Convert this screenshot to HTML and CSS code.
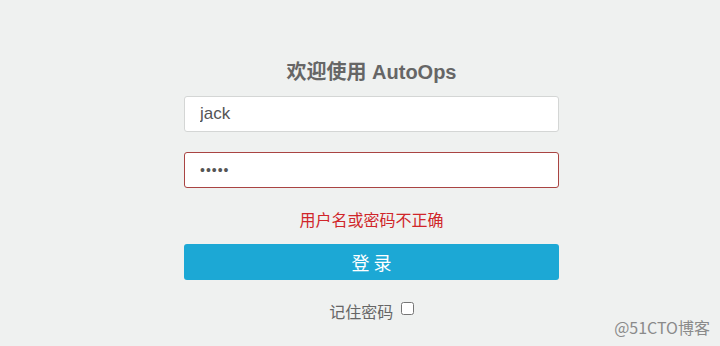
FILE: index.html
```html
<!DOCTYPE html>
<html lang="zh-CN">
<head>
    <meta charset="UTF-8">
    <meta name="viewport" content="width=device-width, initial-scale=1.0">
    <title>AutoOps 登录</title>
    <link rel="stylesheet" href="styles.css">
</head>
<body>
    <form class="login">
        <h1 class="title">欢迎使用 AutoOps</h1>
        <input class="field" type="text" value="jack">
        <input class="field field-error" type="password" value="12345">
        <p class="error">用户名或密码不正确</p>
        <button class="submit" type="button">登 录</button>
        <label class="remember">记住密码 <input type="checkbox" class="check"></label>
    </form>
    <div class="watermark">@51CTO博客</div>
</body>
</html>
```

FILE: styles.css
```css
body {
    margin: 0;
    height: 346px;
    background-color: #eff1f0;
    font-family: "Liberation Sans", "Noto Sans CJK SC", sans-serif;
    position: relative;
    overflow: hidden;
}
.login {
    width: 375px;
    margin-left: 184px;
    padding-top: 58px;
    display: flex;
    flex-direction: column;
}
.title {
    margin: 0 0 10px;
    font-size: 20px;
    line-height: 28px;
    font-weight: bold;
    color: #666;
    text-align: center;
}
.field {
    box-sizing: border-box;
    height: 36px;
    margin: 0 0 20px;
    padding: 0 15px;
    border: 1px solid #d4d6d5;
    border-radius: 3px;
    background-color: #fff;
    font-family: "Liberation Sans", sans-serif;
    font-size: 17px;
    color: #555;
    outline: none;
}
.field-error {
    border-color: #a94442;
    margin-bottom: 0;
    font-size: 14px;
    letter-spacing: 1px;
}
.error {
    margin: 21px 0 15px;
    line-height: 20px;
    font-size: 16px;
    color: #d0262a;
    text-align: center;
    font-family: "Noto Sans CJK SC", sans-serif;
}
.submit {
    height: 36px;
    border: none;
    border-radius: 3px;
    background-color: #1ca8d5;
    color: #fff;
    font-family: "Noto Sans CJK SC", sans-serif;
    font-size: 18px;
    cursor: pointer;
}
.remember {
    margin-top: 21px;
    line-height: 20px;
    font-size: 16px;
    color: #666;
    text-align: center;
    font-family: "Noto Sans CJK SC", sans-serif;
}
.check {
    width: 13px;
    height: 13px;
    margin: 0 0 0 4px;
    vertical-align: 3px;
}
.watermark {
    position: absolute;
    right: 10px;
    bottom: 7px;
    font-size: 16px;
    color: #8a8a8a;
    font-family: "Noto Sans CJK SC", sans-serif;
}
```
